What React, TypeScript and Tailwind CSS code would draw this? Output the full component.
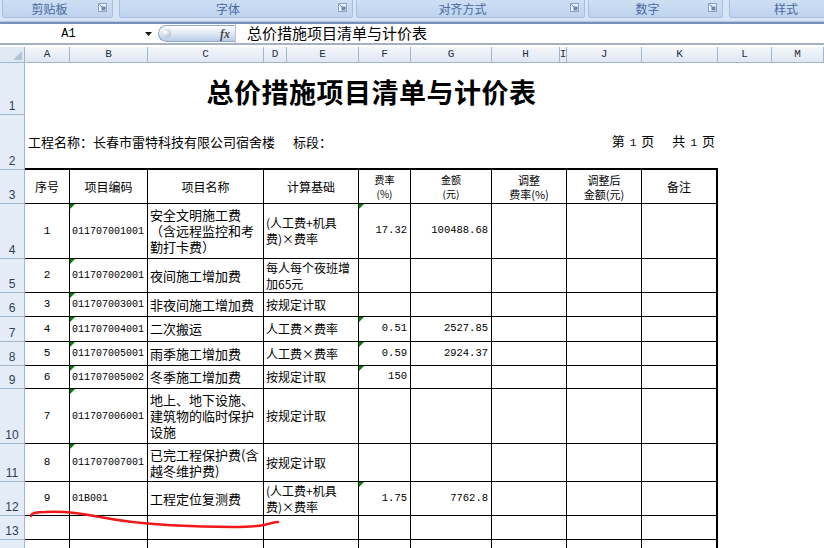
import React from "react";

const CJK = "font-['Noto_Sans_CJK_SC',sans-serif]";
const MONO = "font-['Liberation_Mono','Noto_Sans_CJK_SC',monospace]";
const GRID =
  "grid grid-cols-[25px_45px_78px_116px_23px_72px_52px_81px_68px_7px_75px_76px_54px_1fr]";

function Launcher() {
  return (
    <svg
      className="absolute right-[5px] top-[3px]"
      width="9"
      height="9"
      viewBox="0 0 9 9"
    >
      <rect x="0.5" y="0.5" width="8" height="8" fill="#e9f0f9" stroke="#8aa2c4" />
      <rect x="3.5" y="3.5" width="4" height="4" fill="#6f86aa" />
      <path d="M1.5 1.5 L4.5 4.5" stroke="#6f86aa" strokeWidth="1" />
    </svg>
  );
}

function Group({
  w,
  label,
  launcher = true,
}: {
  w: string;
  label: string;
  launcher?: boolean;
}) {
  return (
    <div
      className={`${w} shrink-0 h-[18px] relative rounded-b-[3px] border border-t-0 border-[#a8c0e0] bg-linear-to-b from-[#cddff3] to-[#bed3ee] flex items-center justify-center pr-[16px] ${CJK} text-[12px] leading-[16px] text-[#4a68a0]`}
    >
      {label}
      {launcher && <Launcher />}
    </div>
  );
}

function RowHead({ n }: { n: string }) {
  return (
    <div className="bg-[#e4ecf7] border-r border-b border-[#9eb6ce] flex items-end justify-center pb-[1px] font-['Liberation_Sans',sans-serif] text-[12px] leading-[13px] text-[#2e3f58]">
      {n}
    </div>
  );
}

function Flag() {
  return (
    <span className="absolute left-0 top-0 w-0 h-0 border-t-[5px] border-r-[5px] border-t-[#008000] border-r-transparent" />
  );
}

function Lines({ lines }: { lines?: string[] }) {
  if (!lines) return null;
  return (
    <div className="flex flex-col">
      {lines.map((l, i) => (
        <div key={i} className="h-[16px] leading-[16px] whitespace-nowrap">
          {l}
        </div>
      ))}
    </div>
  );
}

type Row = {
  n: string;
  h: string;
  no?: string;
  code?: string;
  codeFlag?: boolean;
  name?: string[];
  calc?: string[];
  rate?: string;
  rateFlag?: boolean;
  amt?: string;
};

const rows: Row[] = [
  {
    n: "4",
    h: "h-[55px]",
    no: "1",
    code: "011707001001",
    codeFlag: true,
    name: ["安全文明施工费", "（含远程监控和考", "勤打卡费）"],
    calc: ["(人工费+机具", "费)×费率"],
    rate: "17.32",
    rateFlag: true,
    amt: "100488.68",
  },
  {
    n: "5",
    h: "h-[34px]",
    no: "2",
    code: "011707002001",
    codeFlag: true,
    name: ["夜间施工增加费"],
    calc: ["每人每个夜班增", "加65元"],
  },
  {
    n: "6",
    h: "h-[24px]",
    no: "3",
    code: "011707003001",
    codeFlag: true,
    name: ["非夜间施工增加费"],
    calc: ["按规定计取"],
  },
  {
    n: "7",
    h: "h-[25px]",
    no: "4",
    code: "011707004001",
    codeFlag: true,
    name: ["二次搬运"],
    calc: ["人工费×费率"],
    rate: "0.51",
    rateFlag: true,
    amt: "2527.85",
  },
  {
    n: "8",
    h: "h-[24px]",
    no: "5",
    code: "011707005001",
    codeFlag: true,
    name: ["雨季施工增加费"],
    calc: ["人工费×费率"],
    rate: "0.59",
    rateFlag: true,
    amt: "2924.37",
  },
  {
    n: "9",
    h: "h-[23px]",
    no: "6",
    code: "011707005002",
    codeFlag: true,
    name: ["冬季施工增加费"],
    calc: ["按规定计取"],
    rate: "150",
    rateFlag: true,
  },
  {
    n: "10",
    h: "h-[55px]",
    no: "7",
    code: "011707006001",
    codeFlag: true,
    name: ["地上、地下设施、", "建筑物的临时保护", "设施"],
    calc: ["按规定计取"],
  },
  {
    n: "11",
    h: "h-[38px]",
    no: "8",
    code: "011707007001",
    codeFlag: true,
    name: ["已完工程保护费(含", "越冬维护费)"],
    calc: ["按规定计取"],
  },
  {
    n: "12",
    h: "h-[34px]",
    no: "9",
    code: "01B001",
    name: ["工程定位复测费"],
    calc: ["(人工费+机具", "费)×费率"],
    rate: "1.75",
    rateFlag: true,
    amt: "7762.8",
  },
  { n: "13", h: "h-[24px]" },
  { n: "", h: "h-[24px]" },
];

const cell = "border-r border-b border-black relative flex items-center overflow-hidden";

function DataRow({ r }: { r: Row }) {
  return (
    <div className={`${GRID} ${r.h}`}>
      <RowHead n={r.n} />
      <div className={`${cell} justify-center ${MONO} text-[11px]`}>{r.no}</div>
      <div className={`${cell} pl-[2px] ${MONO} text-[10px] whitespace-nowrap`}>
        {r.codeFlag && <Flag />}
        {r.code}
      </div>
      <div className={`${cell} pl-[2px] ${CJK} text-[13px] text-black`}>
        <Lines lines={r.name} />
      </div>
      <div className={`${cell} col-span-2 pl-[2px] ${CJK} text-[12px] text-black`}>
        <Lines lines={r.calc} />
      </div>
      <div className={`${cell} justify-end pr-[3px] ${MONO} text-[10.5px]`}>
        {r.rateFlag && <Flag />}
        {r.rate}
      </div>
      <div className={`${cell} justify-end pr-[3px] ${MONO} text-[10.5px]`}>{r.amt}</div>
      <div className={`${cell} col-span-2`} />
      <div className={cell} />
      <div className="border-r-2 border-b border-black" />
      <div />
      <div />
    </div>
  );
}

const letters = ["A", "B", "C", "D", "E", "F", "G", "H", "I", "J", "K", "L", "M"];

export default function App() {
  return (
    <div className="relative w-[824px] h-[548px] overflow-hidden bg-white">
      {/* Ribbon */}
      <div className="h-[21px] bg-[#d7e4f4] flex gap-[3px] pl-[2px]">
        <Group w="w-[111px]" label="剪贴板" />
        <div className="w-[1px]" />
        <Group w="w-[234px]" label="字体" />
        <Group w="w-[229px]" label="对齐方式" />
        <Group w="w-[135px]" label="数字" />
        <div className="w-[1px]" />
        <Group w="w-[130px]" label="样式" launcher={false} />
      </div>
      <div className="h-[1px] bg-[#b3c7e2]" />
      <div className="h-[2px] bg-[#7891b8]" />

      {/* Formula bar */}
      <div className="h-[19px] flex items-center bg-white">
        <div className="w-[155px] flex items-center">
          <span className={`w-[137px] text-center ${MONO} text-[12px] text-black`}>A1</span>
          <svg className="ml-[8px]" width="7" height="4" viewBox="0 0 7 4">
            <path d="M0 0 H7 L3.5 4 Z" fill="#111" />
          </svg>
        </div>
        <div className="ml-[3px] h-[17px] w-[77px] rounded-l-full border border-r-0 border-[#8ea8cc] bg-linear-to-b from-white via-[#dfe8f5] to-[#b9cde8] flex items-center justify-between pl-[3px] pr-[5px]">
          <span className="w-[9px] h-[9px] rounded-full bg-[radial-gradient(circle_at_35%_35%,#ffffff,#9eacc0)]" />
          <span className="italic font-bold text-[12px] leading-[12px] font-['Liberation_Serif',serif] text-[#4a4a4a]">
            fx
          </span>
        </div>
        <div className={`flex-1 h-full border-l border-[#b8c6d8] pl-[11px] flex items-center ${CJK} text-[15px] text-black`}>
          总价措施项目清单与计价表
        </div>
      </div>
      <div className="h-[2px] bg-[#a4b1c4]" />
      <div className="h-[2px] bg-white" />

      {/* Column headers */}
      <div className={`${GRID} h-[16px]`}>
        <div className="relative bg-[#dfe8f3] border-r border-b border-[#9eb6ce]">
          <span className="absolute right-[2px] bottom-[2px] w-0 h-0 border-b-[9px] border-l-[9px] border-b-[#b4c4d9] border-l-transparent" />
        </div>
        {letters.map((l) => (
          <div
            key={l}
            className={`bg-linear-to-b from-[#f4f7fb] to-[#dfe7f1] border-r border-b border-[#9eb6ce] flex items-center justify-center ${MONO} text-[11px] text-[#1e3048] overflow-hidden`}
          >
            {l}
          </div>
        ))}
      </div>

      {/* Row 1: title */}
      <div className={`${GRID} h-[52px]`}>
        <RowHead n="1" />
        <div
          className={`col-span-11 flex items-center justify-center pt-[5px] ${CJK} font-bold text-[27px] leading-[30px] text-black tracking-[0.5px]`}
        >
          总价措施项目清单与计价表
        </div>
      </div>

      {/* Row 2 */}
      <div className={`${GRID} h-[55px]`}>
        <RowHead n="2" />
        <div
          className={`col-span-11 border-b-2 border-black flex items-center justify-between pl-[3px] pr-[3px] ${CJK} text-[13px] text-black`}
        >
          <span>
            工程名称：长春市雷特科技有限公司宿舍楼
            <span className="ml-[18px]">标段：</span>
          </span>
          <span className="flex items-baseline">
            <span>第</span>
            <span className={`ml-[5px] ${MONO} text-[11px]`}>1</span>
            <span className="ml-[5px]">页</span>
            <span className="ml-[18px]">共</span>
            <span className={`ml-[5px] ${MONO} text-[11px]`}>1</span>
            <span className="ml-[5px]">页</span>
          </span>
        </div>
      </div>

      {/* Row 3: header */}
      <div className={`${GRID} h-[34px]`}>
        <RowHead n="3" />
        <div className={`${cell} justify-center ${CJK} text-[12px]`}>序号</div>
        <div className={`${cell} justify-center ${CJK} text-[12px]`}>项目编码</div>
        <div className={`${cell} justify-center ${CJK} text-[12px]`}>项目名称</div>
        <div className={`${cell} col-span-2 justify-center ${CJK} text-[12px]`}>计算基础</div>
        <div className={`${cell} justify-center text-center ${CJK} text-[10px] leading-[14px]`}>
          <div>
            费率
            <br />
            (%)
          </div>
        </div>
        <div className={`${cell} justify-center text-center ${CJK} text-[10px] leading-[14px]`}>
          <div>
            金额
            <br />
            (元)
          </div>
        </div>
        <div className={`${cell} col-span-2 justify-center text-center ${CJK} text-[11px] leading-[14px]`}>
          <div>
            调整
            <br />
            费率(%)
          </div>
        </div>
        <div className={`${cell} justify-center text-center ${CJK} text-[11px] leading-[14px]`}>
          <div>
            调整后
            <br />
            金额(元)
          </div>
        </div>
        <div className={`border-r-2 border-b border-black flex items-center justify-center ${CJK} text-[12px]`}>
          备注
        </div>
        <div />
        <div />
      </div>

      {rows.map((r, i) => (
        <DataRow key={i} r={r} />
      ))}

      {/* Red hand-drawn stroke */}
      <svg
        className="absolute left-0 top-0 pointer-events-none"
        width="824"
        height="548"
        viewBox="0 0 824 548"
      >
        <path
          d="M31 516 C31 513 36 512 45 512 C60 511 75 512 100 517 C120 521 135 523 167 525 C185 526 200 527 233 527 C248 527 258 526 264 525 C270 524 274 522 278 522"
          fill="none"
          stroke="#f01818"
          strokeWidth="2.6"
          strokeLinecap="round"
          strokeLinejoin="round"
        />
      </svg>
    </div>
  );
}
